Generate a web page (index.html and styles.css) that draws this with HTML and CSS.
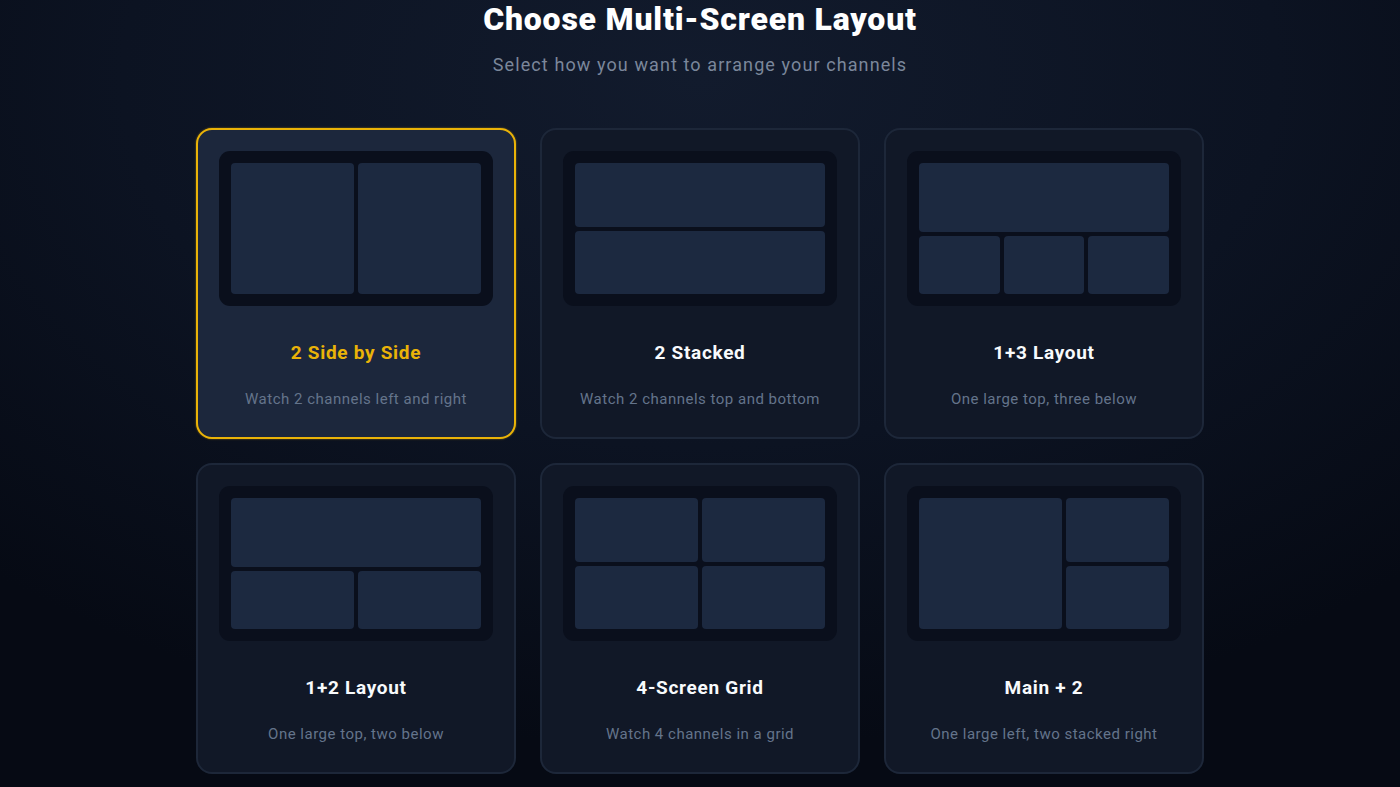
FILE: index.html
```html
<!DOCTYPE html>
<html lang="en">
<head>
<meta charset="utf-8">
<title>Choose Multi-Screen Layout</title>
<link rel="stylesheet" href="styles.css">
</head>
<body>
<main class="page">
  <header class="head">
    <h1 class="title">Choose Multi-Screen Layout</h1>
    <p class="subtitle">Select how you want to arrange your channels</p>
  </header>
  <section class="grid">
    <div class="card selected">
      <div class="preview"><div class="screens l-side">
        <div class="tile"></div><div class="tile"></div>
      </div></div>
      <div class="name">2 Side by Side</div>
      <div class="desc">Watch 2 channels left and right</div>
    </div>
    <div class="card">
      <div class="preview"><div class="screens l-stack">
        <div class="tile"></div><div class="tile"></div>
      </div></div>
      <div class="name">2 Stacked</div>
      <div class="desc">Watch 2 channels top and bottom</div>
    </div>
    <div class="card">
      <div class="preview"><div class="screens l-13">
        <div class="tile wide"></div><div class="tile"></div><div class="tile"></div><div class="tile"></div>
      </div></div>
      <div class="name">1+3 Layout</div>
      <div class="desc">One large top, three below</div>
    </div>
    <div class="card">
      <div class="preview"><div class="screens l-12">
        <div class="tile wide"></div><div class="tile"></div><div class="tile"></div>
      </div></div>
      <div class="name">1+2 Layout</div>
      <div class="desc">One large top, two below</div>
    </div>
    <div class="card">
      <div class="preview"><div class="screens l-4">
        <div class="tile"></div><div class="tile"></div><div class="tile"></div><div class="tile"></div>
      </div></div>
      <div class="name">4-Screen Grid</div>
      <div class="desc">Watch 4 channels in a grid</div>
    </div>
    <div class="card">
      <div class="preview"><div class="screens l-main">
        <div class="tile tall"></div><div class="tile"></div><div class="tile"></div>
      </div></div>
      <div class="name">Main + 2</div>
      <div class="desc">One large left, two stacked right</div>
    </div>
  </section>
</main>
</body>
</html>
```

FILE: styles.css
```css
* { box-sizing: border-box; }
html, body { margin: 0; padding: 0; height: 100%; }
body {
  font-family: Roboto, "Noto Sans", "Liberation Sans", sans-serif;
  background: radial-gradient(ellipse 75% 85% at 50% 10%, #121b2d 0%, #0c1322 55%, #060a14 100%);
  color: #f8fafc;
  overflow: hidden;
}
.page {
  display: flex;
  flex-direction: column;
  align-items: center;
}
.head { text-align: center; }
.title {
  margin: 0;
  padding-top: 1px;
  font-size: 32px;
  line-height: 36px;
  font-weight: 900;
  letter-spacing: 0.8px;
  color: #ffffff;
}
.subtitle {
  margin: 16px 0 0;
  font-size: 18px;
  line-height: 24px;
  letter-spacing: 1.1px;
  color: #7b879b;
}
.grid {
  margin-top: 51px;
  display: grid;
  grid-template-columns: repeat(3, 320px);
  column-gap: 24px;
  row-gap: 24px;
}
.card {
  height: 311px;
  border: 2px solid #1d2739;
  border-radius: 16px;
  background: #111827;
  padding: 21px 21px 0;
  display: flex;
  flex-direction: column;
  align-items: center;
}
.card.selected {
  border-color: #eab308;
  background: #1c273c;
  box-shadow: 0 0 2px rgba(234, 179, 8, 0.6);
}
.preview {
  width: 100%;
  height: 155px;
  padding: 12px;
  border-radius: 11px;
  background: #0a0f1c;
}
.screens {
  width: 100%;
  height: 100%;
  display: grid;
  gap: 4px;
}
.tile {
  background: #1c2940;
  border-radius: 4px;
}
.l-side { grid-template-columns: 1fr 1fr; }
.l-stack { grid-template-rows: 1fr 1fr; }
.l-13 { grid-template-columns: 1fr 1fr 1fr; grid-template-rows: 1.2fr 1fr; }
.l-12 { grid-template-columns: 1fr 1fr; grid-template-rows: 1.2fr 1fr; }
.l-13 .wide { grid-column: 1 / 4; }
.l-12 .wide { grid-column: 1 / 3; }
.l-4 { grid-template-columns: 1fr 1fr; grid-template-rows: 1fr 1fr; }
.l-main { grid-template-columns: 1.4fr 1fr; grid-template-rows: 1fr 1fr; }
.l-main .tall { grid-row: 1 / 3; }
.name {
  margin-top: 35px;
  font-size: 19px;
  line-height: 24px;
  font-weight: 700;
  letter-spacing: 0.7px;
  color: #f8fafc;
}
.selected .name { color: #eab308; }
.desc {
  margin-top: 24px;
  font-size: 15px;
  line-height: 20px;
  letter-spacing: 0.5px;
  color: #64748b;
}
```
